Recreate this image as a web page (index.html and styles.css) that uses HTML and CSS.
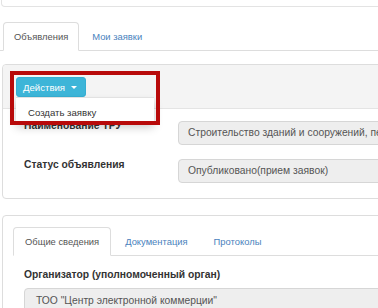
FILE: index.html
```html
<!DOCTYPE html>
<html lang="ru">
<head>
    <meta charset="UTF-8">
    <title>Объявления</title>
    <link rel="stylesheet" href="styles.css">
</head>
<body>
    <div class="page">
        <div class="top-panel"></div>

        <ul class="tabs main-tabs">
            <li class="tab active">Объявления</li>
            <li class="tab"><a href="#">Мои заявки</a></li>
        </ul>

        <div class="panel">
            <div class="panel-heading">
                <div class="dropdown">
                    <button class="btn-info">Действия <span class="caret"></span></button>
                    <div class="dropdown-menu">
                        <a href="#">Создать заявку</a>
                    </div>
                    <div class="highlight"></div>
                </div>
            </div>
            <div class="panel-body">
                <div class="form-row">
                    <label>Наименование ТРУ</label>
                    <div class="field">Строительство зданий и сооружений, первичное строительство</div>
                </div>
                <div class="form-row">
                    <label>Статус объявления</label>
                    <div class="field">Опубликовано(прием заявок)</div>
                </div>
            </div>
        </div>

        <div class="panel second">
            <ul class="tabs inner-tabs">
                <li class="tab active">Общие сведения</li>
                <li class="tab"><a href="#">Документация</a></li>
                <li class="tab"><a href="#">Протоколы</a></li>
            </ul>
            <div class="block">
                <label>Организатор (уполномоченный орган)</label>
                <div class="field wide">ТОО "Центр электронной коммерции"</div>
            </div>
        </div>
    </div>
</body>
</html>
```

FILE: styles.css
```css
* {
    box-sizing: border-box;
    margin: 0;
    padding: 0;
}

html, body {
    height: 100%;
    overflow: hidden;
    font-family: "Liberation Sans", Arial, sans-serif;
    font-size: 9.6px;
    color: #333;
    background-color: #ffffff;
}

.page {
    width: 400px;
}

a {
    color: #4a82bd;
    text-decoration: none;
}

.top-panel {
    height: 7px;
    margin-left: 1px;
    border: 1px solid #e3e3e3;
    border-top: none;
    border-radius: 0 0 4px 4px;
}

/* tabs */
.tabs {
    list-style: none;
    display: flex;
    border-bottom: 1px solid #ddd;
    font-size: 9.4px;
}

.main-tabs {
    margin-top: 15px;
    padding-left: 3px;
}

.tab {
    height: 29px;
    line-height: 28px;
    padding: 0 10px;
    margin-right: 2px;
    margin-bottom: -1px;
    border: 1px solid transparent;
    border-radius: 4px 4px 0 0;
}

.inner-tabs .tab {
    padding: 0 11px;
}

.tab.active {
    color: #555;
    background-color: #fff;
    border-color: #ddd #ddd transparent;
}

/* panels */
.panel {
    margin-top: 13px;
    margin-left: 2px;
    border: 1px solid #ddd;
    border-radius: 4px;
}

.panel-heading {
    height: 44px;
    padding: 12px 0 0 13px;
    background-color: #f4f4f4;
    border-bottom: 1px solid #e4e4e4;
    border-radius: 4px 4px 0 0;
}

.dropdown {
    position: relative;
    z-index: 2;
    width: 70px;
}

.btn-info {
    display: block;
    height: 20px;
    width: 70px;
    padding-left: 6px;
    text-align: left;
    font-family: inherit;
    font-size: 9.6px;
    color: #fff;
    background-color: #3db5d8;
    border: 1px solid #36aed2;
    border-radius: 3px;
}

.caret {
    display: inline-block;
    margin-left: 3px;
    vertical-align: 2px;
    border-top: 3px solid #fff;
    border-left: 3px solid transparent;
    border-right: 3px solid transparent;
}

.dropdown-menu {
    position: absolute;
    top: 20px;
    left: 0;
    width: 138px;
    height: 24px;
    padding-left: 12px;
    line-height: 30px;
    background-color: #fff;
    border-top: 1px solid #e2e2e2;
    box-shadow: 0 6px 10px rgba(0, 0, 0, 0.22);
}

.dropdown-menu a {
    color: #333;
}

.highlight {
    position: absolute;
    top: -6px;
    left: -6px;
    width: 150px;
    height: 54px;
    border: 4px solid #b80a0a;
}

.panel-body {
    padding: 12px 0 15px 0;
    font-size: 10.3px;
}

.form-row {
    display: flex;
    margin-bottom: 14px;
}

.form-row:last-child {
    margin-bottom: 0;
}

.form-row label,
.block label {
    font-weight: bold;
    color: #333;
}

.form-row label {
    width: 175px;
    padding: 0 0 0 21px;
    line-height: 12px;
}

.form-row:first-child label {
    margin-top: -1px;
}

.field {
    height: 24px;
    line-height: 22px;
    padding-left: 9px;
    white-space: nowrap;
    overflow: hidden;
    color: #555;
    background-color: #eeeeee;
    border: 1px solid #d6d6d6;
    border-radius: 4px;
    flex: 1;
}

.second {
    margin-top: 16px;
    padding: 11px 0 0 10px;
    border-radius: 4px 4px 0 0;
    height: 120px;
}

.block {
    padding: 13px 0 0 11px;
    font-size: 10.3px;
}

.block label {
    display: block;
    margin-bottom: 8px;
}

.field.wide {
    height: 26px;
    padding-left: 11px;
    line-height: 24px;
}
```
